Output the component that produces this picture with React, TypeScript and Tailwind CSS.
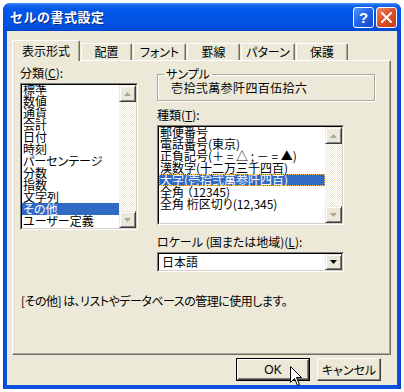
import React from 'react'

// Excel "セルの書式設定" dialog, Windows XP look

const kinds = [
  '郵便番号',
  '電話番号(東京)',
  '正負記号(＋ = △ ; － = ▲)',
  '漢数字(十二万三千四百)',
  '大字(壱拾弐萬参阡四百)',
  '全角 （12345)',
  '全角 桁区切り(12,345)',
]

const categories = [
  '標準',
  '数値',
  '通貨',
  '会計',
  '日付',
  '時刻',
  'パーセンテージ',
  '分数',
  '指数',
  '文字列',
  'その他',
  'ユーザー定義',
]

const ArrowButton: React.FC<{ down?: boolean }> = ({ down }) => (
  <div className="w-[17px] h-[17px] shrink-0 flex items-center justify-center bg-[#ECE9D8] border border-t-[#ECE9D8] border-l-[#ECE9D8] border-r-[#404040] border-b-[#404040] shadow-[inset_1px_1px_0_#ffffff,inset_-1px_-1px_0_#808080]">
    <svg width="7" height="4" viewBox="0 0 7 4">
      {down ? <path d="M0 0h7L3.5 4z" fill="#ACA899" /> : <path d="M0 4h7L3.5 0z" fill="#ACA899" />}
    </svg>
  </div>
)

const ScrollBar: React.FC = () => (
  <div className="w-[17px] shrink-0 flex flex-col bg-[repeating-conic-gradient(#ECE9D8_0_25%,#ffffff_0_50%)] bg-[length:2px_2px]">
    <ArrowButton />
    <div className="flex-1" />
    <ArrowButton down />
  </div>
)

const TabItem: React.FC<{ label: string; w: string }> = ({ label, w }) => (
  <div
    className={`${w} h-[17px] flex items-center justify-center rounded-t-[2px] border-l border-t border-r border-l-white border-t-white border-r-[#716F64] shadow-[inset_-1px_0_0_#ACA899] text-[12px] leading-[12px]`}
  >
    {label}
  </div>
)

export default function App() {
  return (
    <div className="w-[404px] h-[392px] bg-white pl-[3px] pt-[3px] text-black font-['Noto_Sans_CJK_JP','Noto_Sans_CJK_SC',sans-serif] [font-feature-settings:'palt'] relative overflow-hidden">
      <div className="w-[398px] h-[386px] rounded-t-[7px] bg-[linear-gradient(90deg,#0A3FC8,#0B52E0_3px,#0B52E0_394px,#0A3FC8)] flex flex-col">
        {/* title bar */}
        <div className="h-[28px] shrink-0 flex items-center pl-[7px] pr-[4px] rounded-t-[7px] bg-[linear-gradient(#4A9BFF_0,#1A68F0_2px,#0058E8_6px,#0054E3_16px,#0150E0_24px,#0046C8_28px)]">
          <span className="text-white font-bold text-[13px] leading-[14px] tracking-[0.5px] [font-feature-settings:normal] [text-shadow:1px_1px_0_#0A2A8A]">
            セルの書式設定
          </span>
          <div className="ml-auto flex gap-[2px]">
            <div className="w-[21px] h-[21px] rounded-[3px] border border-white bg-[linear-gradient(135deg,#5C95F8,#2463E8_45%,#1248D0)] flex items-center justify-center">
              <span className="text-white font-bold text-[15px] leading-[15px] font-['Liberation_Sans',sans-serif]">?</span>
            </div>
            <div className="w-[21px] h-[21px] rounded-[3px] border border-white bg-[linear-gradient(135deg,#F08A66,#E0502C_45%,#C83A18)] flex items-center justify-center">
              <svg width="11" height="11" viewBox="0 0 11 11">
                <path d="M1 1L10 10M10 1L1 10" stroke="#ffffff" strokeWidth="2" strokeLinecap="square" />
              </svg>
            </div>
          </div>
        </div>

        {/* client area */}
        <div className="mx-[4px] mb-[4px] flex-1 bg-[#ECE9D8] pt-[9px] pl-[5px] pr-[6px] flex flex-col">
          {/* tabs */}
          <div className="h-[20px] flex items-end gap-[1px] relative z-10">
            <div className="w-[68px] h-[21px] -mb-[1px] flex items-center justify-center rounded-t-[2px] border-l border-t border-r border-l-white border-t-white border-r-[#716F64] shadow-[inset_-1px_0_0_#ACA899] bg-[#ECE9D8] text-[12px] leading-[12px] pb-[1px]">
              表示形式
            </div>
            <TabItem label="配置" w="w-[51px]" />
            <TabItem label="フォント" w="w-[53px]" />
            <TabItem label="罫線" w="w-[53px]" />
            <TabItem label="パターン" w="w-[54px]" />
            <TabItem label="保護" w="w-[52px]" />
          </div>

          {/* tab page */}
          <div className="h-[295px] border border-l-white border-t-white border-r-[#716F64] border-b-[#716F64] shadow-[inset_-1px_-1px_0_#ACA899] pt-[6px] pl-[7px] flex flex-col text-[12px] leading-[12px]">
            <div className="flex">
              {/* left column */}
              <div className="w-[118px] flex flex-col">
                <div className="h-[12px]">
                  分類(<span className="underline">C</span>):
                </div>
                <div className="mt-[4px] h-[147px] border border-t-[#808080] border-l-[#808080] border-r-white border-b-white">
                  <div className="h-full flex border border-t-[#000000] border-l-[#000000] border-r-[#D4D0C8] border-b-[#D4D0C8] bg-white">
                    <div className="flex-1 overflow-hidden">
                      <div className="-mt-[2px]">
                        {categories.map((c) => (
                          <div
                            key={c}
                            className={`h-[12px] pl-[1px] leading-[12px] whitespace-nowrap ${c === 'その他' ? 'bg-[#316AC5] text-white' : ''}`}
                          >
                            {c}
                          </div>
                        ))}
                      </div>
                    </div>
                    <ScrollBar />
                  </div>
                </div>
              </div>

              {/* right column */}
              <div className="ml-[19px] w-[218px] flex flex-col">
                <fieldset className="mt-[1px] h-[33px] border border-[#ACA899] shadow-[inset_1px_1px_0_#ffffff,1px_1px_0_#ffffff] pl-[9px] pt-[2px]">
                  <legend className="-ml-[3px] px-[2px] h-[12px] leading-[12px]">サンプル</legend>
                  <div className="ml-[4px] h-[12px] tracking-[0.4px]">壱拾弐萬参阡四百伍拾六</div>
                </fieldset>

                <div className="mt-[8px] h-[12px]">
                  種類(<span className="underline">T</span>):
                </div>
                <div className="mt-[4px] w-[187px] h-[100px] border border-t-[#808080] border-l-[#808080] border-r-white border-b-white">
                  <div className="h-full flex border border-t-[#000000] border-l-[#000000] border-r-[#D4D0C8] border-b-[#D4D0C8] bg-white">
                    <div className="flex-1 overflow-hidden">
                      <div className="-mt-[1px]">
                        {kinds.map((k, i) => (
                          <div
                            key={k}
                            className={`h-[12px] pl-[1px] leading-[12px] whitespace-nowrap ${i === 4 ? 'bg-[#316AC5] text-white outline-1 outline-dotted outline-[#F0C060] -outline-offset-1' : ''}`}
                          >
                            {k}
                          </div>
                        ))}
                      </div>
                    </div>
                    <ScrollBar />
                  </div>
                </div>

                <div className="mt-[11px] h-[12px]">
                  ロケール (国または地域)(<span className="underline">L</span>):
                </div>
                <div className="mt-[4px] w-[187px] h-[20px] border border-t-[#808080] border-l-[#808080] border-r-white border-b-white">
                  <div className="h-full flex border border-t-[#000000] border-l-[#000000] border-r-[#D4D0C8] border-b-[#D4D0C8] bg-white">
                    <div className="flex-1 pl-[3px] flex items-center">日本語</div>
                    <div className="w-[17px] h-[16px] flex items-center justify-center bg-[#ECE9D8] border border-t-[#ECE9D8] border-l-[#ECE9D8] border-r-[#404040] border-b-[#404040] shadow-[inset_1px_1px_0_#ffffff,inset_-1px_-1px_0_#808080]">
                      <svg width="7" height="4" viewBox="0 0 7 4">
                        <path d="M0 0h7L3.5 4z" fill="#000000" />
                      </svg>
                    </div>
                  </div>
                </div>
              </div>
            </div>

            <div className="mt-[23px] ml-[1px] h-[12px] tracking-[-0.5px]">
              [その他] は、リストやデータベースの管理に使用します。
            </div>
          </div>

          {/* buttons */}
          <div className="mt-[3px] flex justify-end gap-[7px] pr-[10px]">
            <div className="relative w-[74px] h-[23px] border border-black">
              <div className="h-full flex items-center justify-center border border-t-white border-l-white border-r-[#404040] border-b-[#404040] shadow-[inset_-1px_-1px_0_#808080] text-[12px] leading-[12px] font-['Liberation_Sans','Noto_Sans_CJK_JP',sans-serif]">
                OK
              </div>
              <svg className="absolute left-[53px] top-[7px]" width="13" height="21" viewBox="0 0 13 21">
                <path
                  d="M0.5 0.5V16.5L4.5 12.5L7.5 19.5L9.5 18.5L6.5 11.5H11.5Z"
                  fill="#ffffff"
                  stroke="#000000"
                  strokeWidth="1"
                />
              </svg>
            </div>
            <div className="w-[64px] h-[23px] flex items-center justify-center border border-t-white border-l-white border-r-[#404040] border-b-[#404040] shadow-[inset_-1px_-1px_0_#808080] text-[12px] leading-[12px]">
              キャンセル
            </div>
          </div>
        </div>
      </div>
    </div>
  )
}
